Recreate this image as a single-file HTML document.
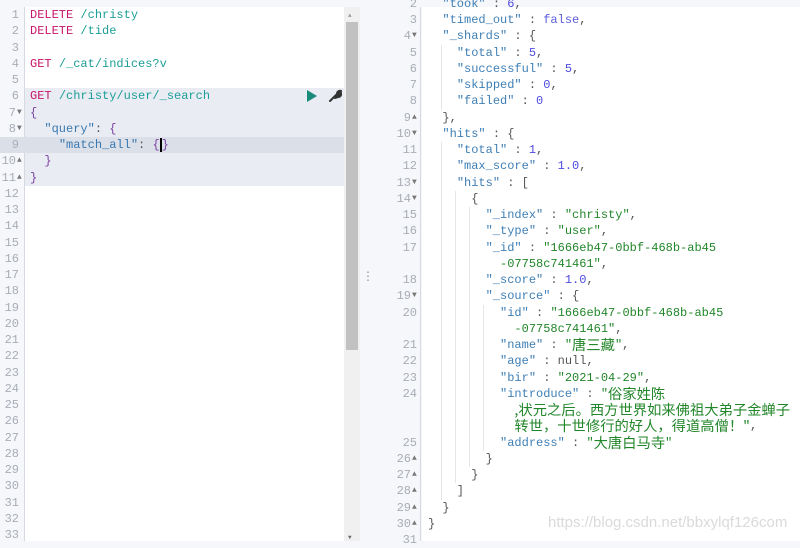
<!DOCTYPE html>
<html><head><meta charset="utf-8"><style>
*{margin:0;padding:0;box-sizing:border-box}
body{width:800px;height:541px;overflow:hidden;background:#f5f7fa;position:relative;font-family:"Liberation Mono","Noto Sans CJK SC",monospace;font-size:12px}
.abs{position:absolute}
.row{position:absolute;height:16.25px;line-height:16.25px;white-space:pre}
.ln{color:#a8adb6;text-align:right}
.k{color:#c7166b}.u{color:#1d9e98}.s{color:#3a78b0}.p{color:#555}.b{color:#7b3fa0}
.key{color:#3f7fb5}.str{color:#22862a}.num{color:#4d4ce0}.kw{color:#5d5ddb}
.fa{font-size:8px;color:#777}
.cjk{font-family:"Noto Sans CJK SC",sans-serif;font-size:14.3px;line-height:16px;display:inline-block;vertical-align:top}
.g{position:absolute;width:1px;height:16.25px;background:#e6e6e6}
</style></head><body>
<div class="abs" style="left:0;top:7px;width:25px;height:534px;background:#f5f7fa;border-right:1px solid #d6dae0"></div>
<div class="abs" style="left:25px;top:7px;width:319px;height:534px;background:#fff"></div>
<div class="abs" style="left:25px;top:88px;width:319px;height:97.5px;background:#e9ecf3"></div>
<div class="abs" style="left:0;top:137px;width:344px;height:16.25px;background:#dadfe8"></div>
<div class="abs" style="left:344px;top:7px;width:16px;height:534px;background:#f0f0f0"></div>
<div class="abs" style="left:346px;top:22px;width:12px;height:328px;background:#c1c1c1"></div>
<div class="abs" style="left:348px;top:12px;font-size:6px;color:#999">▲</div>
<div class="abs" style="left:348px;top:534px;font-size:6px;color:#666">▼</div>
<div class="abs" style="left:365px;top:272px;font-size:10px;color:#888;line-height:4px">·<br>·<br>·</div>
<div id="L"></div>
<div class="abs" style="left:307px;top:90px;width:0;height:0;border-left:10px solid #1a8a7a;border-top:6px solid transparent;border-bottom:6px solid transparent"></div>
<svg class="abs" style="left:328px;top:89px" width="14" height="14" viewBox="0 0 14 14"><path d="M2 12 L7 7 M6 8 L9 5 A3 3 0 0 1 13 2 L11 4 L12 5 L13 4 A3 3 0 0 1 10 8 L7 9 Z" stroke="#333" stroke-width="2" fill="#333" stroke-linecap="round"/></svg>
<div class="abs" style="left:374px;top:7px;width:47px;height:534px;background:#f5f7fa;border-right:1px solid #d6dae0"></div>
<div class="abs" style="left:422px;top:7px;width:378px;height:534px;background:#fff"></div>
<div id="R"></div>
<div class="abs" style="left:548px;top:514px;font-family:'Liberation Sans',sans-serif;font-size:15px;color:#dadada">https://blog.csdn.net/bbxylqf126com</div>
<script>
var L=[
['1','<span class="k">DELETE</span> <span class="u">/christy</span>'],
['2','<span class="k">DELETE</span> <span class="u">/tide</span>'],
['3',''],
['4','<span class="k">GET</span> <span class="u">/_cat/indices?v</span>'],
['5',''],
['6','<span class="k">GET</span> <span class="u">/christy/user/_search</span>'],
['7','<span class="b">{</span>',1],
['8','  <span class="s">"query"</span><span class="p">: </span><span class="b">{</span>',1],
['9','    <span class="s">"match_all"</span><span class="p">: </span><span class="b">{<span style="border-left:2px solid #000"></span>}</span>'],
['10','  <span class="b">}</span>',2],
['11','<span class="b">}</span>',2]];
for(var i=12;i<=33;i++)L.push([''+i,'']);
var h='';
L.forEach(function(r,i){var t=7+i*16.25;
h+='<div class="row ln" style="left:0;top:'+t+'px;width:'+(r[2]?16:19)+'px">'+r[0]+'</div>';
if(r[2])h+='<div class="row fa" style="left:17px;top:'+t+'px">'+(r[2]==1?'▼':'▲')+'</div>';
h+='<div class="row" style="left:30px;top:'+t+'px">'+r[1]+'</div>';});
document.getElementById('L').innerHTML=h;
function K(s){return '<span class="key">"'+s+'"</span><span class="p"> : </span>'}
function S(s){return '<span class="str">'+s+'</span>'}
function N(s){return '<span class="num">'+s+'</span>'}
var R=[
['2','  '+K('took')+N('6')+',',0],
['3','  '+K('timed_out')+'<span class="kw">false</span>,',0],
['4','  '+K('_shards')+'{',1],
['5','    '+K('total')+N('5')+',',0],
['6','    '+K('successful')+N('5')+',',0],
['7','    '+K('skipped')+N('0')+',',0],
['8','    '+K('failed')+N('0'),0],
['9','  },',2],
['10','  '+K('hits')+'{',1],
['11','    '+K('total')+N('1')+',',0],
['12','    '+K('max_score')+N('1.0')+',',0],
['13','    '+K('hits')+'[',1],
['14','      {',1],
['15','        '+K('_index')+S('"christy"')+',',0],
['16','        '+K('_type')+S('"user"')+',',0],
['17','        '+K('_id')+S('"1666eb47-0bbf-468b-ab45'),0],
['','          '+S('-07758c741461"')+',',0,8],
['18','        '+K('_score')+N('1.0')+',',0],
['19','        '+K('_source')+'{',1],
['20','          '+K('id')+S('"1666eb47-0bbf-468b-ab45'),0],
['','            '+S('-07758c741461"')+',',0,10],
['21','          '+K('name')+S('"<span class="cjk">唐三藏</span>"')+',',0],
['22','          '+K('age')+'null,',0],
['23','          '+K('bir')+S('"2021-04-29"')+',',0],
['24','          '+K('introduce')+S('"<span class="cjk">俗家姓陈</span>'),0],
['','            '+S('<span class="cjk">,状元之后。西方世界如来佛祖大弟子金蝉子</span>'),0,10],
['','            '+S('<span class="cjk">转世，十世修行的好人，得道高僧！"</span>')+',',0,10],
['25','          '+K('address')+S('"<span class="cjk">大唐白马寺</span>"'),0],
['26','        }',2],
['27','      }',2],
['28','    ]',2],
['29','  }',2],
['30','}',2],
['31','',0]];
h='';
R.forEach(function(r,i){var t=-4.25+i*16.25;
var n=r[3]!==undefined?r[3]:(r[1].match(/^ */)[0].length);
var lv=Math.floor(n/2);
for(var j=1;j<lv;j++)h+='<div class="g" style="left:'+(428+14*j-1)+'px;top:'+t+'px"></div>';
h+='<div class="row ln" style="left:380px;top:'+t+'px;width:'+(r[2]?31:37)+'px">'+r[0]+'</div>';
if(r[2])h+='<div class="row fa" style="left:412px;top:'+t+'px">'+(r[2]==1?'▼':'▲')+'</div>';
h+='<div class="row p" style="left:428px;top:'+t+'px">'+r[1]+'</div>';});
document.getElementById('R').innerHTML=h;
</script>
</body></html>
